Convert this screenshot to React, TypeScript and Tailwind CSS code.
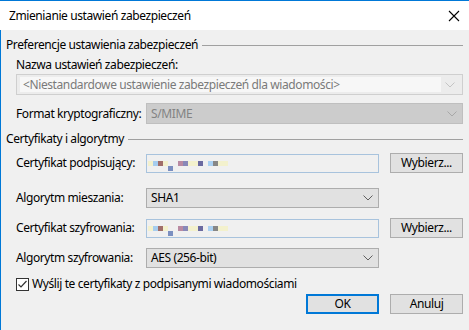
import React from "react";

const font = { fontFamily: '"Noto Sans", "Liberation Sans", sans-serif', letterSpacing: "-0.4px" };

function Chevron({ color }: { color: string }) {
  return (
    <svg width="10" height="6" viewBox="0 0 10 6" className="shrink-0">
      <path d="M0.5 0.5 L5 5 L9.5 0.5" fill="none" stroke={color} strokeWidth="1" />
    </svg>
  );
}

function Redacted() {
  const row: [number, number, string][] = [
    [1, 5, "#f3f1cd"],
    [6, 5, "#a6cdef"],
    [11, 5, "#a06e6a"],
    [16, 5, "#f3f1cd"],
    [31, 5, "#b98aa2"],
    [36, 5, "#8888b8"],
    [41, 10, "#f3f1cd"],
    [51, 5, "#6b6aa0"],
    [61, 5, "#abd1f2"],
    [66, 5, "#878787"],
    [71, 10, "#f3f1cd"],
  ];
  return (
    <svg width="90" height="18" viewBox="0 0 90 18" className="absolute left-0 top-0">
      {row.map(([x, w, c], i) => (
        <rect key={i} x={x} y={6} width={w} height={5} fill={c} />
      ))}
      <rect x={21} y={11} width={5} height={5} fill="#7b8fc0" />
    </svg>
  );
}

function GroupHeader({ text }: { text: string }) {
  return (
    <div className="flex items-center h-[14px] pr-[6px]">
      <span className="text-[12px] leading-[14px] text-black whitespace-nowrap">{text}</span>
      <div className="flex-1 ml-[4px] h-[1px] bg-[#a0a0a0]" />
    </div>
  );
}

function Button({ label, primary }: { label: string; primary?: boolean }) {
  return (
    <div
      className={
        "w-[73px] h-[20px] bg-[#e1e1e1] flex items-center justify-center text-[12px] text-black shrink-0 " +
        (primary ? "border-2 border-[#0078d7]" : "border border-[#adadad]")
      }
    >
      {label}
    </div>
  );
}

function Label({ text }: { text: string }) {
  return <div className="w-[130px] shrink-0 text-[12px] leading-[14px] text-black whitespace-nowrap">{text}</div>;
}

function TextBox() {
  return (
    <div className="relative w-[233px] h-[19px] shrink-0 bg-[#f0f0f0] border border-[#a8c3dd]">
      <Redacted />
    </div>
  );
}

function Combo({ value }: { value: string }) {
  return (
    <div className="w-[233px] h-[20px] bg-[#e1e1e1] border border-[#adadad] flex items-center pl-[4px] pr-[5px]">
      <span className="flex-1 text-[12px] text-black">{value}</span>
      <Chevron color="#606060" />
    </div>
  );
}

export default function App() {
  return (
    <div style={font} className="w-[469px] h-[330px] flex flex-col bg-[#f0f0f0] overflow-hidden">
      <div className="h-[30px] bg-white flex items-center pl-[9px] pr-[8px] border-t border-[#0078d7]">
        <span className="flex-1 text-[12px] text-black">Zmienianie ustawień zabezpieczeń</span>
        <svg width="12" height="12" viewBox="0 0 12 12" className="mr-[1px]">
          <path d="M1 1 L11 11 M11 1 L1 11" stroke="#000" strokeWidth="1.1" />
        </svg>
      </div>
      <div className="flex-1 flex flex-col border-l border-[#0078d7] pl-[5px] pt-[8px]">
        <GroupHeader text="Preferencje ustawienia zabezpieczeń" />
        <div className="pl-[10px] pr-[6px] flex flex-col">
          <div className="mt-[6px] h-[14px] text-[12px] leading-[14px] text-black">Nazwa ustawień zabezpieczeń:</div>
          <div className="mt-[2px] h-[21px] bg-[#ececec] border border-[#cfcfcf] flex items-center pl-[3px] pr-[3px]">
            <div className="flex-1 h-[15px] bg-[#f7f7f7] flex items-center pl-[3px] text-[12px] text-[#7a7a7a] whitespace-nowrap">
              &lt;Niestandardowe ustawienie zabezpieczeń dla wiadomości&gt;
            </div>
            <div className="w-[18px] flex justify-center">
              <Chevron color="#c4c4c4" />
            </div>
          </div>
          <div className="mt-[8px] flex items-center">
            <Label text="Format kryptograficzny:" />
            <div className="flex-1 h-[21px] bg-[#cccccc] border border-[#bfbfbf] flex items-center pl-[4px] pr-[5px]">
              <span className="flex-1 text-[12px] text-[#838383]">S/MIME</span>
              <Chevron color="#a8a8a8" />
            </div>
          </div>
        </div>
        <div className="mt-[8px]">
          <GroupHeader text="Certyfikaty i algorytmy" />
        </div>
        <div className="pl-[10px] pr-[6px] flex flex-col">
          <div className="mt-[7px] flex items-center gap-[11px]">
            <div className="flex items-center">
              <Label text="Certyfikat podpisujący:" />
              <TextBox />
            </div>
            <Button label="Wybierz..." />
          </div>
          <div className="mt-[15px] flex items-center">
            <Label text="Algorytm mieszania:" />
            <Combo value="SHA1" />
          </div>
          <div className="mt-[10px] flex items-center gap-[11px]">
            <div className="flex items-center">
              <Label text="Certyfikat szyfrowania:" />
              <TextBox />
            </div>
            <Button label="Wybierz..." />
          </div>
          <div className="mt-[10px] flex items-center">
            <Label text="Algorytm szyfrowania:" />
            <Combo value="AES (256-bit)" />
          </div>
          <div className="mt-[9px] flex items-center gap-[3px]">
            <div className="w-[13px] h-[13px] bg-white border border-[#333333] flex items-center justify-center">
              <svg width="11" height="11" viewBox="0 0 11 11">
                <path d="M1.5 5.5 L4 8 L9.5 2" fill="none" stroke="#333333" strokeWidth="1.2" />
              </svg>
            </div>
            <span className="text-[12px] leading-[14px] text-black">Wyślij te certyfikaty z podpisanymi wiadomościami</span>
          </div>
          <div className="mt-[3px] flex justify-end gap-[11px]">
            <Button label="OK" primary />
            <Button label="Anuluj" />
          </div>
        </div>
      </div>
    </div>
  );
}
